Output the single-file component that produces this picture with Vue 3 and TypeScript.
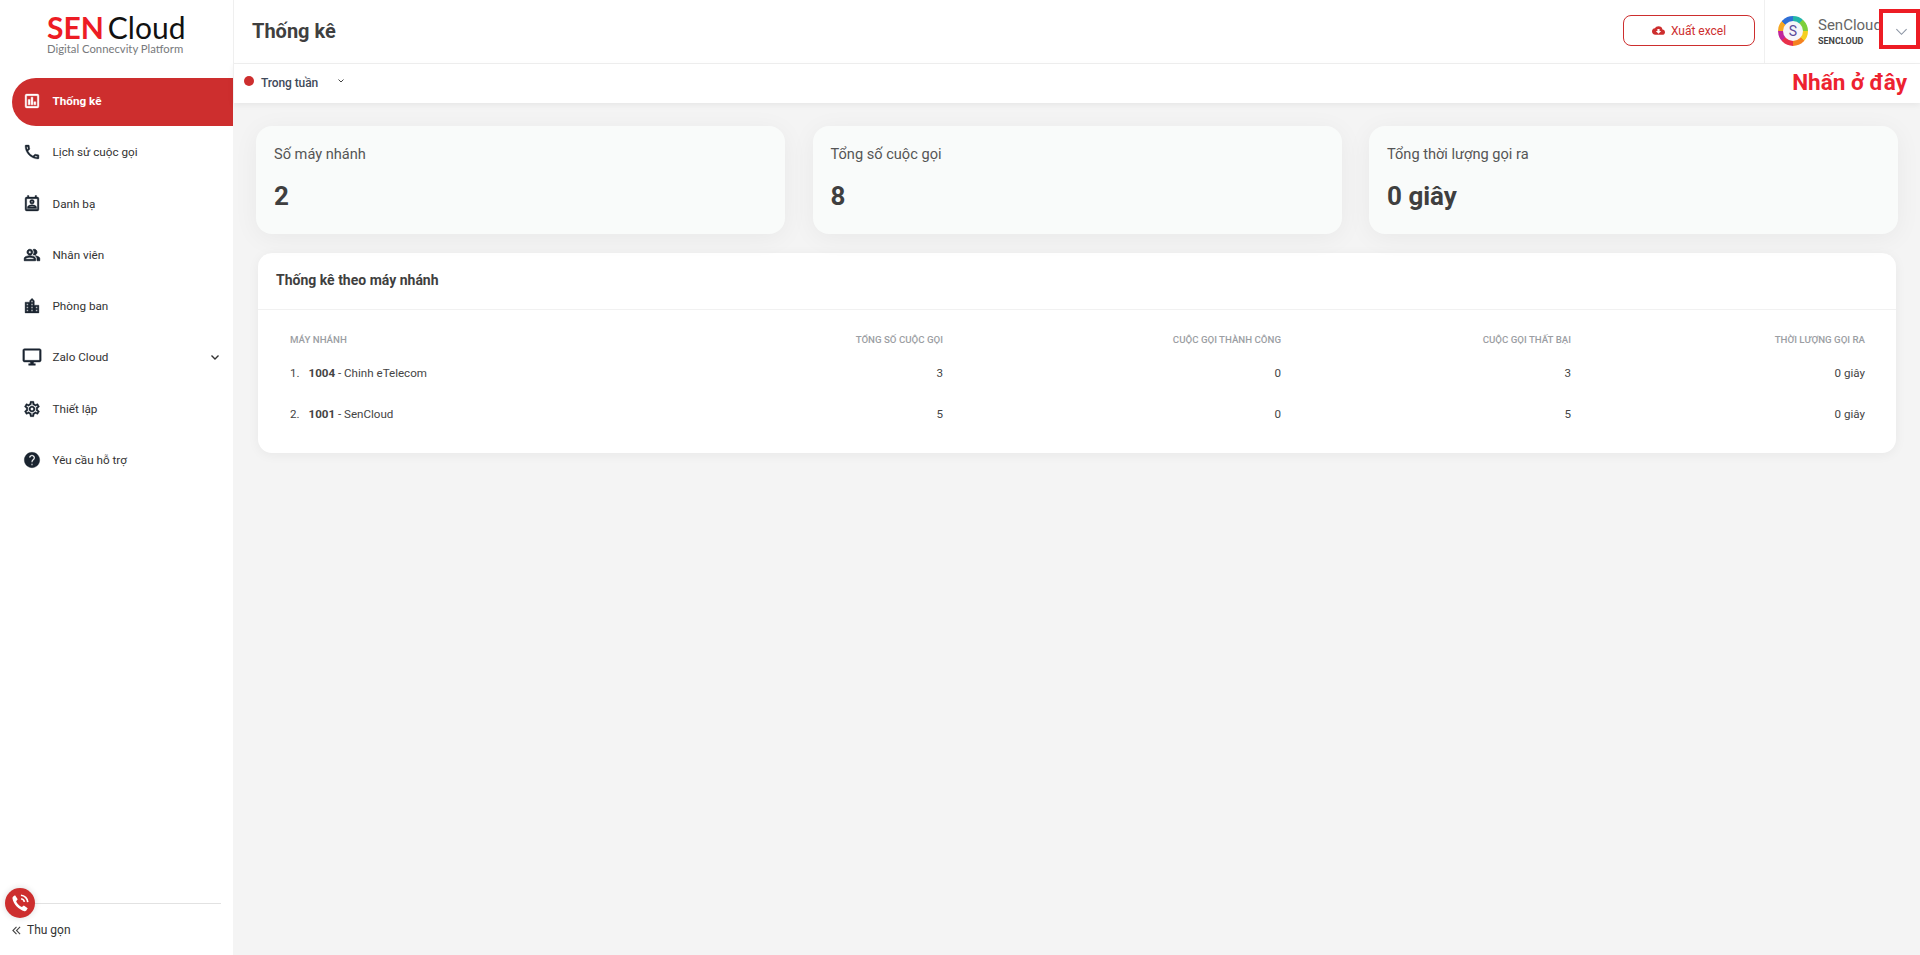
<script setup lang="ts">
interface NavItem { label: string; icon: string; active?: boolean; caret?: boolean }
const nav: NavItem[] = [
  { label: 'Thống kê', icon: 'chart', active: true },
  { label: 'Lịch sử cuộc gọi', icon: 'phone' },
  { label: 'Danh bạ', icon: 'contact' },
  { label: 'Nhân viên', icon: 'people' },
  { label: 'Phòng ban', icon: 'building' },
  { label: 'Zalo Cloud', icon: 'monitor', caret: true },
  { label: 'Thiết lập', icon: 'gear' },
  { label: 'Yêu cầu hỗ trợ', icon: 'help' },
]
const icons: Record<string, string> = {
  chart: 'M19 3H5a2 2 0 0 0-2 2v14a2 2 0 0 0 2 2h14a2 2 0 0 0 2-2V5a2 2 0 0 0-2-2zm0 16H5V5h14v14zM7 10h2.500v7H7zm3.800-3h2.400v10h-2.400zM14.500 13H17v4h-2.500z',
  phone: 'M6.540 5c.06.89.21 1.760.45 2.590l-1.200 1.200c-.41-1.200-.67-2.470-.76-3.790h1.510m9.860 12.020c.85.240 1.720.390 2.600.450v1.490c-1.320-.09-2.590-.35-3.800-.75l1.200-1.190M7.500 3H4c-.55 0-1 .45-1 1 0 9.390 7.610 17 17 17 .55 0 1-.45 1-1v-3.490c0-.55-.45-1-1-1-1.240 0-2.450-.2-3.570-.57a.84.84 0 0 0-.31-.05c-.26 0-.51.100-.71.290l-2.200 2.200a15.149 15.149 0 0 1-6.590-6.590l2.200-2.200c.28-.28.36-.67.25-1.020A11.360 11.360 0 0 1 8.500 4c0-.55-.45-1-1-1z',
  contact: 'M19 3h-1V1h-2v2H8V1H6v2H5a2 2 0 0 0-2 2v14a2 2 0 0 0 2 2h14a2 2 0 0 0 2-2V5a2 2 0 0 0-2-2zm0 16H5V5h14v14zM12 6a3 3 0 1 0 0 6 3 3 0 0 0 0-6zm0 4a1 1 0 1 1 0-2 1 1 0 0 1 0 2zm-6 8h12v-1.500c0-2.500-4-3.500-6-3.500s-6 1-6 3.500V18zm2.300-2c.7-.5 2.300-1 3.700-1s3 .5 3.700 1H8.300z',
  people: 'M16.670 13.130C18.040 14.060 19 15.320 19 17v3h4v-3c0-2.180-3.570-3.470-6.330-3.870zM15 12c2.210 0 4-1.790 4-4s-1.790-4-4-4c-.47 0-.91.100-1.330.240a5.980 5.980 0 0 1 0 7.520c.42.140.86.240 1.330.240zM9 12c2.210 0 4-1.790 4-4s-1.790-4-4-4-4 1.790-4 4 1.790 4 4 4zm0-6c1.100 0 2 .9 2 2s-.9 2-2 2-2-.9-2-2 .9-2 2-2zM9 13c-2.670 0-8 1.340-8 4v3h16v-3c0-2.660-5.330-4-8-4zm6 5H3v-.990C3.200 16.290 6.300 15 9 15s5.800 1.290 6 2v1z',
  building: 'M15 11V5l-3-3-3 3v2H3v14h18V11h-6zm-8 8H5v-2h2v2zm0-4H5v-2h2v2zm0-4H5V9h2v2zm6 8h-2v-2h2v2zm0-4h-2v-2h2v2zm0-4h-2V9h2v2zm0-4h-2V5h2v2zm6 12h-2v-2h2v2zm0-4h-2v-2h2v2z',
  monitor: 'M21 2H3c-1.100 0-2 .9-2 2v12c0 1.100.9 2 2 2h7v2H8v2h8v-2h-2v-2h7c1.100 0 2-.9 2-2V4c0-1.100-.9-2-2-2zm0 14H3V4h18v12z',
  gear: 'M19.430 12.980c.04-.32.07-.64.07-.98 0-.34-.03-.66-.07-.98l2.110-1.650c.19-.15.24-.42.12-.64l-2-3.460a.5.5 0 0 0-.61-.22l-2.490 1c-.52-.4-1.080-.73-1.690-.98l-.38-2.650A.488.488 0 0 0 14 2h-4c-.25 0-.46.180-.49.420l-.38 2.650c-.61.25-1.170.59-1.690.98l-2.490-1a.566.566 0 0 0-.18-.03c-.17 0-.34.090-.43.250l-2 3.460c-.13.220-.07.490.12.640l2.110 1.650c-.04.320-.07.650-.07.980 0 .33.03.660.07.980l-2.110 1.650c-.19.150-.24.420-.12.640l2 3.460a.5.5 0 0 0 .61.220l2.490-1c.52.400 1.080.730 1.690.980l.38 2.650c.03.240.24.420.49.420h4c.25 0 .46-.180.49-.420l.38-2.650c.61-.250 1.170-.590 1.690-.980l2.490 1c.06.020.12.030.18.030.17 0 .34-.090.43-.250l2-3.460c.12-.220.07-.490-.12-.640l-2.110-1.650zm-1.980-1.710c.04.310.05.520.05.730 0 .21-.02.430-.05.730l-.14 1.130.89.700 1.080.840-.7 1.210-1.270-.510-1.040-.420-.9.680c-.43.320-.84.560-1.250.730l-1.060.430-.16 1.130-.2 1.350h-1.400l-.19-1.350-.16-1.130-1.060-.430c-.43-.180-.83-.410-1.230-.710l-.91-.700-1.060.430-1.270.510-.7-1.210 1.080-.840.89-.700-.14-1.130c-.03-.310-.05-.540-.05-.740s.02-.430.05-.730l.14-1.130-.89-.700-1.080-.840.7-1.210 1.270.510 1.040.420.9-.680c.43-.320.84-.560 1.250-.730l1.060-.430.16-1.130.2-1.350h1.390l.19 1.350.16 1.130 1.060.430c.43.180.83.410 1.230.710l.91.700 1.060-.430 1.270-.510.7 1.210-1.070.850-.89.700.14 1.130zM12 8c-2.210 0-4 1.790-4 4s1.790 4 4 4 4-1.790 4-4-1.790-4-4-4zm0 6c-1.100 0-2-.9-2-2s.9-2 2-2 2 .9 2 2-.9 2-2 2z',
  help: 'M12 2C6.480 2 2 6.480 2 12s4.480 10 10 10 10-4.480 10-10S17.520 2 12 2zm1 17h-2v-2h2v2zm2.070-7.750-.9.920C13.450 12.900 13 13.500 13 15h-2v-.5c0-1.100.45-2.100 1.170-2.830l1.240-1.260c.37-.36.590-.86.590-1.410 0-1.100-.9-2-2-2s-2 .9-2 2H8c0-2.210 1.790-4 4-4s4 1.790 4 4c0 .88-.36 1.680-.93 2.250z',
}
const stats = [
  { label: 'Số máy nhánh', value: '2' },
  { label: 'Tổng số cuộc gọi', value: '8' },
  { label: 'Tổng thời lượng gọi ra', value: '0 giây' },
]
const rows = [
  { n: '1.', ext: '1004', name: 'Chinh eTelecom', total: 3, ok: 0, fail: 3, time: '0 giây' },
  { n: '2.', ext: '1001', name: 'SenCloud', total: 5, ok: 0, fail: 5, time: '0 giây' },
]
</script>

<template>
  <div class="app">
    <aside class="side">
      <div class="logo">
        <div class="logo-main"><span class="sen">SEN</span><span class="cloud">Cloud</span></div>
        <div class="logo-sub">Digital Connecvity Platform</div>
      </div>
      <nav class="nav">
        <a v-for="item in nav" :key="item.label" class="nav-item" :class="{ active: item.active }">
          <svg class="nav-icon" :class="'i-' + item.icon" viewBox="0 0 24 24"><path :d="icons[item.icon]" /></svg>
          <span class="nav-label">{{ item.label }}</span>
          <svg v-if="item.caret" class="nav-caret" viewBox="0 0 12 12"><path d="M2.500 4.500 6 8l3.500-3.500" /></svg>
        </a>
      </nav>
      <div class="side-foot">
        <div class="foot-line"></div>
        <div class="collapse">
          <svg class="collapse-icon" viewBox="0 0 10 10"><path d="M5 1 1 5l4 4M9 1 5 5l4 4" /></svg>
          <span>Thu gọn</span>
        </div>
        <div class="call-badge">
          <svg viewBox="0 0 24 24"><path d="M6.600 3.500 9.500 7.800 7.800 10c.9 2.500 3.300 5 6.200 6.300l2.200-1.700 4.200 3-1.500 2.500c-.5.700-1.300 1-2 .8C10.500 19 5 13.500 3.800 7c-.1-.7.200-1.500.8-2z" /><path class="wave" d="M13 3.500c4 .3 7.200 3.500 7.500 7.500M13.200 7.300c1.900.3 3.300 1.700 3.600 3.600" /></svg>
        </div>
      </div>
    </aside>

    <div class="main">
      <header class="top">
        <h1 class="title">Thống kê</h1>
        <button class="export">
          <svg class="cloud-icon" viewBox="0 0 24 24"><path d="M19.350 10.040A7.490 7.490 0 0 0 12 4C9.110 4 6.600 5.640 5.350 8.040A5.994 5.994 0 0 0 0 14c0 3.310 2.690 6 6 6h13c2.760 0 5-2.240 5-5 0-2.640-2.050-4.780-4.650-4.960zM17 13l-5 5-5-5h3V9h4v4h3z" /></svg>
          Xuất excel
        </button>
        <div class="user">
          <div class="avatar"><span>S</span></div>
          <div class="user-text">
            <div class="user-name">SenCloud</div>
            <div class="user-org">SENCLOUD</div>
          </div>
          <svg class="user-caret" viewBox="0 0 14 8"><path d="M1.500 1 7 6.500 12.500 1" /></svg>
        </div>
        <div class="mark"></div>
      </header>
      <div class="filter">
        <span class="dot"></span>
        <span class="filter-label">Trong tuần</span>
        <svg class="filter-caret" viewBox="0 0 10 10"><path d="M2.500 3.500 5 6l2.500-2.500" /></svg>
        <span class="hint">Nhấn ở đây</span>
      </div>

      <section class="content">
        <div class="stats">
          <div v-for="s in stats" :key="s.label" class="stat">
            <div class="stat-label">{{ s.label }}</div>
            <div class="stat-value">{{ s.value }}</div>
          </div>
        </div>
        <div class="panel">
          <div class="panel-head">Thống kê theo máy nhánh</div>
          <div class="table">
            <div class="tr th">
              <div>MÁY NHÁNH</div>
              <div class="r">TỔNG SỐ CUỘC GỌI</div>
              <div class="r">CUỘC GỌI THÀNH CÔNG</div>
              <div class="r">CUỘC GỌI THẤT BẠI</div>
              <div class="r">THỜI LƯỢNG GỌI RA</div>
            </div>
            <div v-for="row in rows" :key="row.ext" class="tr td">
              <div><span class="num">{{ row.n }}</span><b>{{ row.ext }}</b> - {{ row.name }}</div>
              <div class="r">{{ row.total }}</div>
              <div class="r">{{ row.ok }}</div>
              <div class="r">{{ row.fail }}</div>
              <div class="r">{{ row.time }}</div>
            </div>
          </div>
        </div>
      </section>
    </div>
  </div>
</template>

<style>
html, body { margin: 0; background: #f4f4f4; }
</style>

<style scoped>
.app { display: flex; height: 955px; overflow: hidden; font-family: Roboto, "Noto Sans", sans-serif; color: #3f3f3f; background: #f4f4f4; }
.side { position: relative; width: 233px; flex: none; background: #fff; display: flex; flex-direction: column; }
.logo { height: 78px; box-sizing: border-box; padding: 13px 0 0 47px; font-family: Lato, "Open Sans", sans-serif; }
.logo-main { display: flex; align-items: baseline; font-size: 30px; line-height: 28px; height: 28px; }
.sen { color: #ed1c24; font-weight: 700; margin-right: 4px; }
.cloud { color: #111; }
.logo-sub { font-size: 11.300px; line-height: 13px; color: #77797c; white-space: nowrap; margin-top: 1px; }
.nav { display: flex; flex-direction: column; gap: 3.250px; padding-left: 12px; }
.nav-item { display: flex; align-items: center; height: 48px; padding: 0 12px 2px 10px; font-size: 11.700px; color: #333; border-radius: 24px 0 0 24px; box-sizing: border-box; }
.nav-item.active { background: #cd2e2e; color: #fff; font-weight: 700; }
.nav-icon { width: 20px; height: 20px; flex: none; fill: #1a2430; stroke: #1a2430; stroke-width: .5; margin-right: 10.500px; }
.i-chart, .i-phone, .i-gear, .i-contact, .i-building, .i-help { transform: scale(.92); }
.i-people { transform: scale(.86); stroke-width: 1; }
.nav-item.active .nav-icon { fill: #fff; stroke: #fff; }
.nav-label { flex: 1; }
.nav-caret { width: 12px; height: 12px; fill: none; stroke: #333; stroke-width: 1.400; }
.side-foot { margin-top: auto; position: relative; height: 52px; padding: 0 12px 0 30px; }
.foot-line { height: 1px; background: #e2e2e2; }
.collapse { display: flex; align-items: center; gap: 6px; font-size: 12px; color: #333; margin: 18px 0 0 -18px; line-height: 16px; }
.collapse-icon { width: 9px; height: 9px; fill: none; stroke: #444; stroke-width: 1.200; }
.call-badge { position: absolute; left: 5px; top: -15px; width: 30px; height: 30px; border-radius: 50%; background: #cd2e2e; box-shadow: 0 0 6px rgba(0, 0, 0, .15); display: flex; align-items: center; justify-content: center; }
.call-badge svg { width: 22px; height: 22px; fill: #fff; }
.call-badge .wave { fill: none; stroke: #fff; stroke-width: 1.800; }

.main { flex: 1; min-width: 0; display: flex; flex-direction: column; }
.top { position: relative; height: 64px; flex: none; box-sizing: border-box; background: #fff; border-bottom: 1px solid #f0f0f0; border-left: 1px solid #efefef; display: flex; align-items: center; padding-left: 18px; }
.title { margin: 0; font-size: 20px; font-weight: 700; color: #3f3f3f; flex: 1; margin-top: -1px; }
.export { width: 132px; height: 31px; box-sizing: border-box; border: 1px solid #cd2e2e; border-radius: 8px; background: #fff; color: #cd2e2e; font: 12px Roboto, sans-serif; display: flex; align-items: center; justify-content: center; gap: 6px; padding: 0; margin-bottom: 2px; }
.cloud-icon { width: 13px; height: 13px; fill: #cd2e2e; }
.user { width: 156px; height: 63px; box-sizing: border-box; margin-left: 9px; border-left: 1px solid #f0f0f0; display: flex; align-items: center; padding-left: 13px; }
.avatar { width: 30px; height: 30px; border-radius: 50%; flex: none; background: conic-gradient(#23b5a8 0 40deg, #7ccf3a 40deg 90deg, #f5d020 90deg 130deg, #f58220 130deg 180deg, #e8304a 180deg 230deg, #c0259b 230deg 270deg, #f5a623 270deg 310deg, #2f6fd6 310deg 360deg); display: flex; align-items: center; justify-content: center; margin-top: -1px; }
.avatar span { width: 20px; height: 20px; border-radius: 50%; background: #f6f5f9; color: #5b4a9a; font-size: 14px; line-height: 20px; text-align: center; }
.user-text { margin-left: 10px; width: 64px; overflow: hidden; white-space: nowrap; }
.user-name { font-size: 15px; line-height: 19px; color: #666; }
.user-org { font-size: 9px; line-height: 11px; font-weight: 700; color: #444; margin-top: 1px; }
.user-caret { width: 13px; height: 8px; fill: none; stroke: #8d96a5; stroke-width: 1.200; margin-left: 13px; }
.mark { position: absolute; right: 0; top: 9px; width: 41px; height: 40px; box-sizing: border-box; border: 4px solid #ed1c24; }
.filter { position: relative; height: 39px; flex: none; box-sizing: border-box; background: #fff; border-left: 1px solid #efefef; box-shadow: 0 2px 6px rgba(0, 0, 0, .06); display: flex; align-items: center; padding-left: 10px; padding-bottom: 2px; }
.dot { width: 10px; height: 10px; border-radius: 50%; background: #cd2e2e; margin-right: 7px; margin-top: -3px; }
.filter-label { font-size: 12px; font-weight: 500; color: #3f4a5a; letter-spacing: -0.1px; }
.filter-caret { width: 10px; height: 10px; fill: none; stroke: #444; stroke-width: 1; margin-left: 18px; margin-top: -4px; }
.hint { position: absolute; right: 13px; top: 4px; font-size: 22.500px; line-height: 28px; font-weight: 700; color: #ed2230; }
.content { padding: 23px 22px 0 23px; }
.stats { display: grid; grid-template-columns: repeat(3, 529px); column-gap: 27.500px; }
.stat { height: 108px; box-sizing: border-box; background: #f9fbfa; border-radius: 16px; padding: 18px 18px 0; box-shadow: 0 4px 26px rgba(0, 0, 0, .05); }
.stat-label { font-size: 14.600px; line-height: 20px; color: #555; }
.stat-value { font-size: 26px; line-height: 32px; font-weight: 700; color: #3f3f3f; margin-top: 16px; }
.panel { margin: 19px 2px 0; height: 200px; background: #fff; border-radius: 14px; box-shadow: 0 2px 12px rgba(0, 0, 0, .05); }
.panel-head { height: 57px; box-sizing: border-box; border-bottom: 1px solid #f1f1f1; padding: 17px 18px 0; font-size: 14px; line-height: 20px; font-weight: 700; color: #3f3f3f; }
.table { padding: 23px 31px 0 32px; }
.tr { display: grid; grid-template-columns: 400px 253px 338px 290px 294px; }
.th { font-size: 9.700px; line-height: 14px; font-weight: 500; color: #9b9ea3; height: 19px; }
.td { font-size: 11.600px; line-height: 16px; color: #444; height: 41px; align-items: center; }
.td b { font-weight: 700; }
.num { display: inline-block; width: 18.500px; }
.r { text-align: right; }
</style>
